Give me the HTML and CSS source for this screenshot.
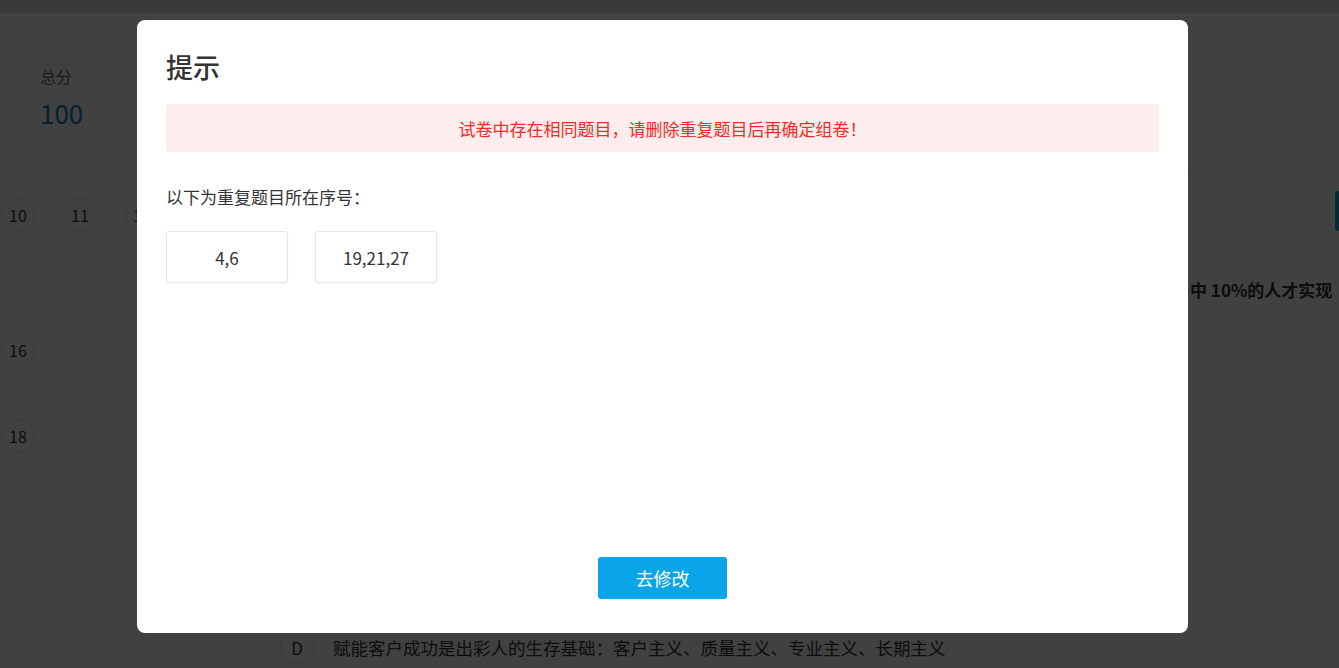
FILE: index.html
```html
<!DOCTYPE html>
<html lang="zh-CN">
<head>
<meta charset="utf-8">
<title>提示</title>
<link rel="stylesheet" href="styles.css">
</head>
<body>
<div class="page">
  <div class="topbar"></div>
  <div class="content">
    <div class="left">
      <div class="score">
        <div class="score-label">总分</div>
        <div class="score-value">100</div>
      </div>
      <div class="nums">
        <div class="num-row row1">
          <span class="num">10</span><span class="num">11</span><span class="num">12</span>
        </div>
        <div class="num-row row2">
          <span class="num">16</span>
        </div>
        <div class="num-row row3">
          <span class="num">18</span>
        </div>
      </div>
      <div class="option">
        <span class="opt-letter">D</span>
        <span class="opt-text">赋能客户成功是出彩人的生存基础：客户主义、质量主义、专业主义、长期主义</span>
      </div>
    </div>
    <div class="right">
      <div class="right-bar"><span class="right-btn"></span></div>
      <div class="question">中 10%的人才实现</div>
    </div>
  </div>
</div>

<div class="overlay"></div>

<div class="modal">
  <h2 class="modal-title">提示</h2>
  <div class="alert">试卷中存在相同题目，请删除重复题目后再确定组卷！</div>
  <p class="label">以下为重复题目所在序号：</p>
  <div class="dup-list">
    <div class="dup">4,6</div>
    <div class="dup">19,21,27</div>
  </div>
  <div class="footer">
    <button class="btn">去修改</button>
  </div>
</div>
</body>
</html>
```

FILE: styles.css
```css
* { box-sizing: border-box; }
html, body {
  margin: 0;
  padding: 0;
  height: 668px;
  overflow: hidden;
  background: #ffffff;
  font-family: "Noto Sans CJK SC", "Noto Sans", sans-serif;
  color: #333333;
}
.page { height: 668px; display: flex; flex-direction: column; }
.topbar { height: 13px; background: #e4e4e4; flex: none; }
.content { flex: 1; display: flex; }
.left { width: 1188px; display: flex; flex-direction: column; }
.score { padding: 52px 0 0 40px; }
.score-label { font-size: 16px; line-height: 22px; color: #666; }
.score-value { margin-top: 9px; font-size: 26px; line-height: 34px; font-weight: 400; color: #1a7fc0; }
.nums { padding-left: 1px; margin-top: 68px; }
.num-row { display: flex; gap: 28px; }
.row2 { margin-top: 101px; }
.row3 { margin-top: 52px; }
.num {
  width: 34px; height: 34px;
  border: 1px solid #e2e2e2;
  border-radius: 50%;
  display: flex; align-items: center; justify-content: center;
  font-size: 16px; color: #333;
}
.option {
  margin-top: auto;
  margin-bottom: 4px;
  margin-left: 280px;
  display: flex; align-items: center; gap: 19px;
}
.opt-letter {
  width: 34px; height: 34px;
  border: 1px solid #e2e2e2;
  border-radius: 50%;
  display: flex; align-items: center; justify-content: center;
  font-size: 17px; color: #333;
}
.opt-text { font-size: 17.5px; color: #333; white-space: nowrap; }
.right { flex: 1; overflow: hidden; }
.right-bar {
  margin-top: 162px;
  border-top: 1px solid #ececec;
  height: 70px;
  display: flex; justify-content: flex-end; align-items: center;
}
.right-btn { width: 4px; height: 40px; background: #0aa5e8; border-radius: 3px 0 0 3px; }
.question {
  margin-top: 32px;
  padding-left: 2px;
  font-size: 17px; font-weight: 700; color: #333;
  white-space: nowrap;
}

.overlay {
  position: fixed; inset: 0;
  background: rgba(0, 0, 0, 0.745);
}
.modal {
  position: fixed;
  left: 137px; top: 20px;
  width: 1051px; height: 613px;
  background: #ffffff;
  border-radius: 8px;
  padding: 29px 29px 34px;
  display: flex; flex-direction: column;
}
.modal-title {
  margin: 0;
  font-size: 27px; line-height: 36px; font-weight: 500; color: #333;
}
.alert {
  margin-top: 19px;
  height: 48px;
  background: #fdeded;
  border-radius: 3px;
  display: flex; align-items: center; justify-content: center;
  font-size: 17px; color: #f52a2a;
}
.label {
  margin: 33px 0 0;
  font-size: 17px; line-height: 24px; color: #333;
}
.dup-list { margin-top: 22px; display: flex; gap: 27px; }
.dup {
  width: 122px; height: 52px;
  border: 1px solid #e6e6e6;
  border-radius: 3px;
  box-shadow: 0 1px 2px rgba(0,0,0,0.04);
  display: flex; align-items: center; justify-content: center;
  font-size: 17px; color: #333;
}
.footer { margin-top: auto; display: flex; justify-content: center; }
.btn {
  width: 129px; height: 42px;
  border: none; border-radius: 3px;
  background: #0aa5e8;
  color: #ffffff;
  font-family: "Noto Sans CJK SC", "Noto Sans", sans-serif;
  font-size: 18px;
  cursor: pointer;
}
```
